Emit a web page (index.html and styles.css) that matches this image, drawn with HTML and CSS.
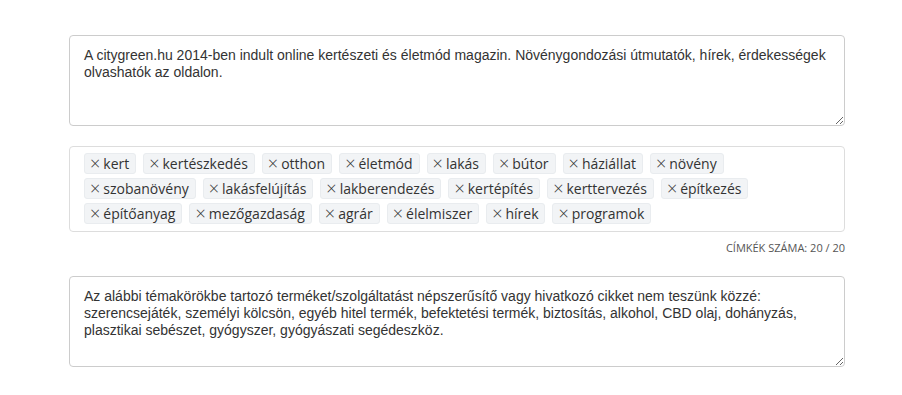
FILE: index.html
```html
<!DOCTYPE html>
<html lang="hu">
<head>
    <meta charset="UTF-8">
    <title>Magazin adatok</title>
    <link rel="stylesheet" href="styles.css">
</head>
<body>
    <div class="container">
        <textarea class="field">A citygreen.hu 2014-ben indult online kertészeti és életmód magazin. Növénygondozási útmutatók, hírek, érdekességek olvashatók az oldalon.</textarea>

        <div class="tags">
            <span class="tag"><span class="remove">×</span>kert</span>
            <span class="tag"><span class="remove">×</span>kertészkedés</span>
            <span class="tag"><span class="remove">×</span>otthon</span>
            <span class="tag"><span class="remove">×</span>életmód</span>
            <span class="tag"><span class="remove">×</span>lakás</span>
            <span class="tag"><span class="remove">×</span>bútor</span>
            <span class="tag"><span class="remove">×</span>háziállat</span>
            <span class="tag"><span class="remove">×</span>növény</span>
            <span class="tag"><span class="remove">×</span>szobanövény</span>
            <span class="tag"><span class="remove">×</span>lakásfelújítás</span>
            <span class="tag"><span class="remove">×</span>lakberendezés</span>
            <span class="tag"><span class="remove">×</span>kertépítés</span>
            <span class="tag"><span class="remove">×</span>kerttervezés</span>
            <span class="tag"><span class="remove">×</span>építkezés</span>
            <span class="tag"><span class="remove">×</span>építőanyag</span>
            <span class="tag"><span class="remove">×</span>mezőgazdaság</span>
            <span class="tag"><span class="remove">×</span>agrár</span>
            <span class="tag"><span class="remove">×</span>élelmiszer</span>
            <span class="tag"><span class="remove">×</span>hírek</span>
            <span class="tag"><span class="remove">×</span>programok</span>
        </div>
        <div class="tag-count">Címkék száma: 20 / 20</div>

        <textarea class="field">Az alábbi témakörökbe tartozó terméket/szolgáltatást népszerűsítő vagy hivatkozó cikket nem teszünk közzé: szerencsejáték, személyi kölcsön, egyéb hitel termék, befektetési termék, biztosítás, alkohol, CBD olaj, dohányzás, plasztikai sebészet, gyógyszer, gyógyászati segédeszköz.</textarea>
    </div>
</body>
</html>
```

FILE: styles.css
```css
body {
    margin: 0;
    padding: 0;
    background-color: #fff;
    font-family: "Open Sans", sans-serif;
    color: #333;
}

.container {
    width: 776px;
    padding: 35px 0 0 69px;
    display: flex;
    flex-direction: column;
}

.field {
    display: block;
    box-sizing: border-box;
    width: 100%;
    height: 91px;
    margin: 0;
    padding: 11px 14px;
    border: 1px solid #ccc;
    border-radius: 4px;
    font-family: "Liberation Sans", Arial, sans-serif;
    font-size: 14px;
    line-height: 17px;
    color: #333;
    resize: vertical;
}

.tags {
    box-sizing: border-box;
    margin-top: 20px;
    padding: 6px 14px 7px;
    border: 1px solid #ddd;
    border-radius: 4px;
    display: flex;
    flex-wrap: wrap;
    gap: 4px 7px;
}

.tag {
    display: inline-flex;
    align-items: center;
    height: 21px;
    padding: 0 6px 0 5px;
    background-color: #f2f4f6;
    border: 1px solid #e9ecef;
    border-radius: 3px;
    font-size: 14px;
    line-height: 19px;
    color: #333;
    box-sizing: border-box;
}

.tag .remove {
    margin-right: 3px;
    font-size: 18px;
    font-weight: 300;
    line-height: 19px;
    color: #333;
}

.tag-count {
    margin-top: 8px;
    margin-bottom: 21px;
    line-height: 15px;
    text-align: right;
    font-size: 11px;
    text-transform: uppercase;
    color: #555;
}
```
